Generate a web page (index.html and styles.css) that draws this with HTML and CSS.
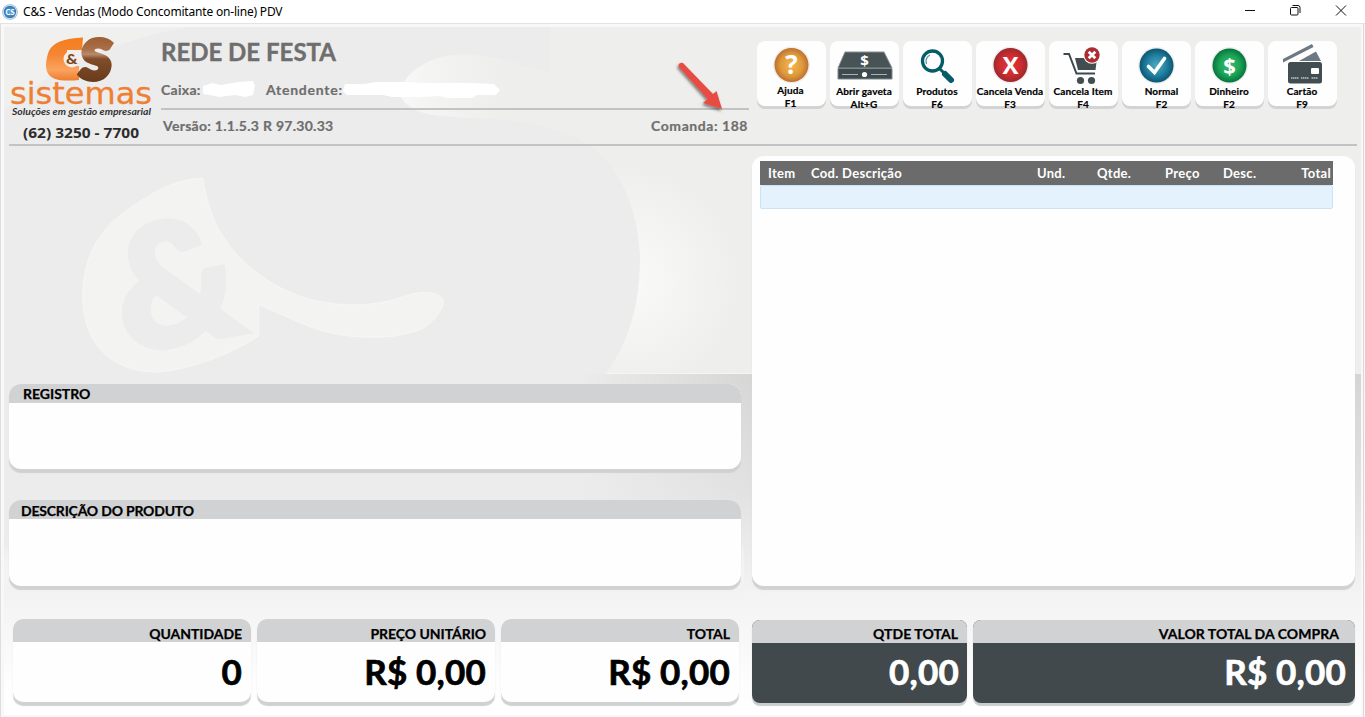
FILE: index.html
```html
<!DOCTYPE html>
<html lang="pt-BR">
<head>
<meta charset="utf-8">
<title>C&amp;S - Vendas (Modo Concomitante on-line) PDV</title>
<link rel="stylesheet" href="styles.css">
</head>
<body>
<div class="window">
  <div class="titlebar">
    <svg class="app-icon" width="16" height="16" viewBox="0 0 16 16">
      <defs><radialGradient id="gi"><stop offset="0" stop-color="#5fa8dc"/><stop offset="1" stop-color="#2c78b8"/></radialGradient></defs>
      <circle cx="8" cy="8" r="7.8" fill="#9ab4ca"/><circle cx="8" cy="8" r="7" fill="#e6eef5"/><circle cx="8" cy="8" r="6.2" fill="url(#gi)"/>
      <text x="8" y="10.6" text-anchor="middle" class="lato-black" font-size="7.5" fill="#fff">CS</text>
    </svg>
    <span class="window-title">C&amp;S - Vendas (Modo Concomitante on-line) PDV</span>
    <svg class="controls" width="120" height="23" viewBox="0 0 120 23" fill="none" stroke="#111" stroke-width="1">
      <path d="M0 10.5h10"/>
      <path d="M45.500 8.500a1 1 0 0 1 1-1h5.500a1 1 0 0 1 1 1v5.500a1 1 0 0 1-1 1h-5.500a1 1 0 0 1-1-1zM47.500 5.500h5.500a2 2 0 0 1 2 2v5.500"/>
      <path d="M91 5.500l10 10M101 5.500l-10 10"/>
    </svg>
  </div>

  <div class="stage">
    <svg class="backdrop" width="1365" height="693" viewBox="0 24 1365 693">
      <defs>
        <linearGradient id="lower" x1="0" y1="374" x2="0" y2="712" gradientUnits="userSpaceOnUse"><stop offset="0" stop-color="#d5d5d5"/><stop offset=".35" stop-color="#e1e1e1"/><stop offset=".65" stop-color="#f3f3f3"/><stop offset="1" stop-color="#fff"/></linearGradient>
        <linearGradient id="fade" x1="500" y1="0" x2="760" y2="0" gradientUnits="userSpaceOnUse"><stop offset=".3" stop-color="#ececec"/><stop offset="1" stop-color="#ececec" stop-opacity="0"/></linearGradient>
        <linearGradient id="floor" x1="0" y1="540" x2="0" y2="700" gradientUnits="userSpaceOnUse"><stop offset="0" stop-color="#fff" stop-opacity="0"/><stop offset=".3" stop-color="#f2f2f2"/><stop offset="1" stop-color="#fff"/></linearGradient>
        <radialGradient id="glow" cx="625" cy="280" r="115" gradientUnits="userSpaceOnUse"><stop offset="0" stop-color="#fafaf9"/><stop offset="1" stop-color="#eeeeec"/></radialGradient>
        <linearGradient id="tip" x1="400" y1="0" x2="520" y2="0" gradientUnits="userSpaceOnUse"><stop offset="0" stop-color="#f8f8f7"/><stop offset="1" stop-color="#f0f0ee" stop-opacity="0"/></linearGradient>
        <clipPath id="sclip"><path d="M550 27H1361V374H606C632 336 640 300 640 256C638 215 625 171 589 145C565 128 530 121 490 119C455 117 433 117 418 111C404 105 400 98 401 91C403 78 418 63 442 57C482 49 510 63 550 72Z"/></clipPath>
      </defs>
      <rect x="0" y="24" width="1365" height="693" fill="#f8f8f8"/>
      <rect x="0" y="24" width="1" height="693" fill="#dedede"/>
      <rect x="1363" y="24" width="1" height="693" fill="#dadada"/>
      <rect x="4" y="27" width="1357" height="347" fill="#ececec"/>
      <rect x="4" y="374" width="1357" height="341" fill="url(#lower)"/>
      <rect x="4" y="374" width="756" height="171" fill="url(#fade)"/>
      <rect x="4" y="540" width="740" height="175" fill="url(#floor)"/>
      <path d="M4 27H190Q80 45 4 110Z" fill="#f0f0ef"/>
      <g clip-path="url(#sclip)">
        <rect x="390" y="27" width="971" height="347" fill="#eeeeec"/>
        <rect x="390" y="27" width="371" height="347" fill="url(#glow)"/>
        <rect x="390" y="50" width="130" height="75" fill="url(#tip)"/>
      </g>
      <path d="M606 373.500H752" stroke="#f5f5f4" stroke-width="1"/>
      <g transform="translate(60 140) scale(.33333)">
        <path d="M428 114C450 250 500 330 600 405C740 510 920 510 1030 470C1080 452 1130 454 1148 476C1156 495 1130 540 1090 564C1020 600 860 605 740 556L596 494V588C500 650 370 695 278 696C150 690 66 610 68 460C75 290 170 225 270 166C320 135 370 118 428 114Z" fill="#f3f3f2" stroke="#f6f6f5" stroke-width="3"/>
        <text class="watermark" transform="translate(196 640) rotate(-10)" font-size="505" textLength="372" lengthAdjust="spacingAndGlyphs">&amp;</text>
      </g>
    </svg>

    <header class="header">
      <div class="brand">
        <svg class="logo" width="144" height="115" viewBox="8 28 144 115">
          <defs>
            <linearGradient id="or" x1="0" y1="0" x2="0" y2="1"><stop offset="0" stop-color="#f57d1c"/><stop offset=".4" stop-color="#f58634"/><stop offset=".75" stop-color="#fba35f"/><stop offset="1" stop-color="#ee7d2c"/></linearGradient>
            <linearGradient id="br" x1="0" y1="-43" x2="0" y2="2" gradientUnits="userSpaceOnUse"><stop offset="0" stop-color="#9c5c30"/><stop offset=".3" stop-color="#a96f47"/><stop offset=".42" stop-color="#b98a68"/><stop offset=".52" stop-color="#814d2a"/><stop offset="1" stop-color="#6a3c1d"/></linearGradient>
          </defs>
          <path d="M83 37.500C64 38 52 43 48.500 52C45 63 44 74 54 78.500C60 81 70 81 79 80V66H67V50H82Z" fill="url(#or)"/>
          <circle cx="72" cy="59" r="8.500" fill="#f3eee9"/>
          <text class="lato-black" transform="translate(78.500 78.500) skewX(-6)" font-size="54" textLength="31" lengthAdjust="spacingAndGlyphs" fill="url(#br)" stroke="url(#br)" stroke-width="5">S</text>
          <circle cx="72" cy="59" r="7.500" fill="#f3eee9"/>
          <text class="lato-black" x="66" y="64" font-size="14" textLength="11.500" lengthAdjust="spacingAndGlyphs" fill="#7a4520">&amp;</text>
          <text class="wordmark" x="10" y="104" font-size="29.500" textLength="142" lengthAdjust="spacingAndGlyphs">sistemas</text>
          <text class="slogan" x="12" y="115" font-size="8.500" textLength="139" lengthAdjust="spacingAndGlyphs">Soluções em gestão empresarial</text>
          <text class="phone" x="23" y="138" font-size="15" textLength="116" lengthAdjust="spacingAndGlyphs">(62) 3250 - 7700</text>
        </svg>
      </div>
      <div class="info">
        <h1 class="store">REDE DE FESTA</h1>
        <div class="operator"><span class="cashier">Caixa:</span><span class="attendant">Atendente:</span></div>
        <div class="sale"><span class="version">Versão: 1.1.5.3 R 97.30.33</span><span class="order">Comanda: 188</span></div>
        <svg class="marks" width="600" height="120" viewBox="161 27 600 120">
          <defs><filter id="sh" x="-30%" y="-30%" width="170%" height="170%"><feDropShadow dx="-1" dy="2" stdDeviation="1.600" flood-opacity=".5"/></filter></defs>
          <path d="M203 86L212 83L221 85L238 82L253 81L255 86L253 95L245 97L235 95L219 97L210 95L203 94Z" fill="#fff"/>
          <path d="M345 84L364 84L376 82H414L417 83H468L494 84L500 90L496 95H477L472 98H446L440 96L420 97H392L383 95H347L343 91Z" fill="#fff"/>
          <path d="M678.500 66.500A3.200 3.200 0 0 1 683 63L713 94L716.500 91L722 109L703 103L707.500 99Z" fill="#e84c43" filter="url(#sh)"/>
        </svg>
      </div>
      <nav class="toolbar">
        <button class="tool tool-help"><svg viewBox="0 0 69 48"><defs>
            <radialGradient id="g1"><stop offset="0" stop-color="#f7b64b"/><stop offset=".65" stop-color="#dd9a3d"/><stop offset="1" stop-color="#c06f2e"/></radialGradient>
            <radialGradient id="g2"><stop offset="0" stop-color="#e0333a"/><stop offset=".6" stop-color="#d02b30"/><stop offset="1" stop-color="#992a2c"/></radialGradient>
            <radialGradient id="g3"><stop offset="0" stop-color="#51a9c2"/><stop offset=".6" stop-color="#1f809f"/><stop offset="1" stop-color="#0c5672"/></radialGradient>
            <radialGradient id="g4"><stop offset="0" stop-color="#3dbb6b"/><stop offset=".6" stop-color="#1ba557"/><stop offset="1" stop-color="#06753d"/></radialGradient></defs>
          <circle cx="34.500" cy="24" r="18.500" fill="#eee"/><circle cx="34.500" cy="24" r="17" fill="url(#g1)"/><text class="badge-char" x="34.500" y="33" font-size="26">?</text></svg><span>Ajuda<br>F1</span></button>
        <button class="tool"><svg viewBox="0 0 69 48"><path d="M15 11H54L62 27H8Z" fill="#485356" stroke="#859095" stroke-width="1"/><path d="M8 27.500H62V38H8Z" fill="#3f4a4e" stroke="#7c888d"/><path d="M12 33.500H28M41 33.500H57" stroke="#a9b1b4"/><circle cx="34.500" cy="33.500" r="2.600" fill="#fff"/><text class="badge-char" x="34.500" y="25" font-size="15">$</text></svg><span>Abrir gaveta<br>Alt+G</span></button>
        <button class="tool"><svg viewBox="0 0 69 48"><circle cx="29.500" cy="20" r="10" fill="#fff" stroke="#045b69" stroke-width="3.300"/><path d="M23.500 23A7 7 0 0 1 27 14" fill="none" stroke="#5495a0" stroke-width="1.200"/><path d="M36.500 27.500L41 32" stroke="#045b69" stroke-width="3"/><path d="M39 33.500L43.500 29.500" stroke="#fff" stroke-width="1"/><path d="M42 33L48 39" stroke="#045b69" stroke-width="6" stroke-linecap="round"/></svg><span>Produtos<br>F6</span></button>
        <button class="tool"><svg viewBox="0 0 69 48"><circle cx="34.500" cy="24" r="18.500" fill="#eee"/><circle cx="34.500" cy="24" r="17" fill="url(#g2)"/><text class="badge-char" x="34.500" y="32.500" font-size="24">X</text></svg><span>Cancela Venda<br>F3</span></button>
        <button class="tool"><svg viewBox="0 0 69 48"><path d="M14.500 13H20L27.500 32.500H46" fill="none" stroke="#3e494d" stroke-width="2"/><path d="M26 17H48L46.500 29H29Z" fill="#414d50"/><circle cx="31.500" cy="39.500" r="3.600" fill="#414d50"/><circle cx="42.500" cy="39.500" r="3.600" fill="#414d50"/><circle cx="43" cy="14" r="8.800" fill="#fff"/><circle cx="43" cy="14" r="7.700" fill="#ab2c31"/><path d="M39.700 10.700L46.300 17.300M46.300 10.700L39.700 17.300" stroke="#fff" stroke-width="2.800"/></svg><span>Cancela Item<br>F4</span></button>
        <button class="tool tool-normal"><svg viewBox="0 0 69 48"><circle cx="34.500" cy="24.500" r="18.500" fill="#eee"/><circle cx="34.500" cy="24.500" r="17" fill="url(#g3)"/><path d="M26.500 25.500L32.500 31.500L42.500 17.500" fill="none" stroke="#fff" stroke-width="3.600" stroke-linecap="round"/></svg><span>Normal<br>F2</span></button>
        <button class="tool"><svg viewBox="0 0 69 48"><circle cx="34.500" cy="24.500" r="18.500" fill="#eee"/><circle cx="34.500" cy="24.500" r="17" fill="url(#g4)"/><text class="badge-char" x="34.500" y="32.500" font-size="22">$</text></svg><span>Dinheiro<br>F2</span></button>
        <button class="tool"><svg viewBox="0 0 69 48"><path d="M15 18L44 3L45.500 6L15 21.500Z" fill="#6c7883"/><path d="M22 25L48 10.500L54 22V29H20Z" fill="#6c7883"/><rect x="19" y="20" width="36" height="23" rx="2.500" fill="#fff"/><rect x="20" y="21" width="34" height="21.500" rx="2.500" fill="#424d52"/><rect x="43" y="27" width="8" height="6" rx="1" fill="#fff"/><path d="M23 37H30.500M33 37H41M43.500 37H50" stroke="#bcc2c5" stroke-width="1.600" stroke-dasharray="1.500 .5"/></svg><span>Cartão<br>F9</span></button>
      </nav>
    </header>

    <main class="main">
      <div class="left">
        <section class="panel registro"><h2>REGISTRO</h2></section>
        <section class="panel descricao"><h2>DESCRIÇÃO DO PRODUTO</h2></section>
        <div class="figures">
          <section class="figure"><h3>QUANTIDADE</h3><p>0</p></section>
          <section class="figure"><h3>PREÇO UNITÁRIO</h3><p>R$ 0,00</p></section>
          <section class="figure"><h3>TOTAL</h3><p>R$ 0,00</p></section>
        </div>
      </div>
      <div class="right">
        <section class="items">
          <div class="thead"><span>Item</span><span>Cod. Descrição</span><span>Und.</span><span>Qtde.</span><span>Preço</span><span>Desc.</span><span class="num">Total</span></div>
          <div class="trow"></div>
        </section>
        <div class="totals">
          <section class="figure dark"><h3>QTDE TOTAL</h3><p>0,00</p></section>
          <section class="figure dark grand"><h3>VALOR TOTAL DA COMPRA</h3><p>R$ 0,00</p></section>
        </div>
      </div>
    </main>
  </div>
</div>
</body>
</html>
```
FILE: styles.css
```css
* { box-sizing: border-box; }
body, h1, h2, h3, p { margin: 0; }
body { font-family: Lato, "Liberation Sans", sans-serif; font-weight: 700; overflow: hidden; background: #fff; }
.window { width: 1365px; height: 717px; display: flex; flex-direction: column; }

.titlebar { height: 24px; flex: none; display: flex; align-items: center; padding: 0 0 0 2px; border-bottom: 1px solid #e3e3e3; background: #fff; }
.window-title { font: 400 12px/23px "Noto Sans", sans-serif; letter-spacing: -.19px; color: #000; margin-left: 5px; white-space: nowrap; }
.app-icon { flex: none; }
.controls { margin-left: auto; }

.stage { position: relative; flex: 1; min-height: 0; display: flex; flex-direction: column; padding: 3px 8px 0 9px; }
.backdrop { position: absolute; left: 0; top: 0; }
.watermark { font-family: Lato, sans-serif; font-weight: 900; fill: #ececec; stroke: #ececec; stroke-width: 16px; }
.lato-black { font-family: Lato, sans-serif; font-weight: 900; }

.header { position: relative; flex: none; height: 119px; display: flex; border-bottom: 2px solid #c3c3c5; }
.brand { width: 152px; height: 115px; margin-left: -1px; padding-top: 1px; }
.logo { overflow: visible; }
.wordmark { font-family: "DejaVu Sans", sans-serif; font-weight: 400; fill: #ee7f33; stroke: #ee7f33; stroke-width: .3px; }
.slogan { font-family: Lato, sans-serif; font-style: italic; font-weight: 700; fill: #333; }
.phone { font-family: "Open Sans", sans-serif; font-weight: 700; fill: #2d2d2d; }

.info { position: relative; width: 588px; margin-left: 1px; color: #6e6e6e; }
.store { font-size: 24px; line-height: 30px; padding-top: 10px; font-weight: 700; white-space: nowrap; -webkit-text-stroke: .4px #6e6e6e; }
.operator { height: 43px; padding-top: 14px; border-bottom: 2px solid #c3c3c5; display: flex; font-size: 14px; line-height: 18px; -webkit-text-stroke: .2px #6e6e6e; }
.cashier { width: 105px; letter-spacing: .3px; }
.attendant { letter-spacing: .75px; }
.sale { display: flex; justify-content: space-between; padding: 7px 1px 0 2px; font-size: 14px; line-height: 18px; -webkit-text-stroke: .2px #6e6e6e; }
.version { letter-spacing: .28px; }
.order { letter-spacing: .55px; }
.marks { position: absolute; left: 0; top: 0; }

.toolbar { display: flex; gap: 4px; margin: 14px 0 0 8px; }
.tool { width: 69px; height: 65px; padding: 0; border: 0; border-radius: 8px; background: #fefefe; box-shadow: 0 3px 0 #d3d3d5; font: 700 10px/13px Lato, sans-serif; color: #000; display: flex; flex-direction: column; align-items: center; white-space: nowrap; -webkit-text-stroke: .2px #000; }
.tool svg { width: 69px; height: 48px; margin-bottom: -4px; flex: none; overflow: visible; -webkit-text-stroke: 0; }
.tool span { position: relative; text-align: center; letter-spacing: .12px; margin-right: 1px; }
.tool-help span { margin: -1px 2px 0 0; }
.tool-normal span { margin: 0 0 0 10px; }
.badge-char { font-family: "Open Sans", sans-serif; font-weight: 700; fill: #fff; text-anchor: middle; }

.main { position: relative; flex: 1; display: flex; gap: 11px; }
.left { width: 732px; padding-top: 238px; }
.panel { height: 85px; border-radius: 12px; background: #fefefe; box-shadow: 0 4px 1px #d0d1d3; overflow: hidden; }
.panel h2 { height: 19px; background: #d1d2d4; font-size: 14px; line-height: 19px; padding-left: 14px; -webkit-text-stroke: .25px #000; }
.descricao { margin-top: 31px; height: 86px; }
.descricao h2 { padding-left: 12px; line-height: 21px; letter-spacing: -.2px; }
.figures { display: flex; gap: 6px; margin: 33px 2px 0 4px; }
.figure { flex: 1; height: 83px; border-radius: 10px; background: #fefefe; box-shadow: 0 4px 1px #d0d1d3; overflow: hidden; text-align: right; }
.figure h3 { height: 23px; background: #d1d2d4; font-size: 14px; line-height: 29px; padding-right: 9px; letter-spacing: -.05px; -webkit-text-stroke: .25px #000; }
.figure p { font-size: 35px; line-height: 58px; padding-right: 9px; letter-spacing: .2px; -webkit-text-stroke: .7px currentColor; }

.right { width: 603px; padding-top: 10px; }
.items { height: 430px; border-radius: 12px; background: #fefefe; box-shadow: 0 4px 1px #d0d1d3; padding: 5px 22px 0 8px; }
.thead { height: 24px; display: grid; grid-template-columns: 43px 226px 60px 68px 58px 57px 1fr; padding: 0 2px 0 8px; background: #6b6b6b; color: #fff; font-size: 13px; line-height: 25px; letter-spacing: .3px; }
.num { text-align: right; }
.trow { height: 24px; background: #e4f2fd; border: 1px solid #c9e4f8; border-radius: 2px; }
.totals { display: flex; gap: 6px; margin-top: 34px; }
.dark { flex: none; width: 215px; background: #41494c; color: #fff; border-radius: 8px; box-shadow: 0 3px 1px #c9cbcc; }
.dark h3 { color: #000; line-height: 27px; letter-spacing: .05px; }
.dark p { padding-right: 8px; line-height: 57px; }
.grand { width: 382px; }
.grand h3 { padding-right: 16px; }
.grand p { padding-right: 9px; }
```
